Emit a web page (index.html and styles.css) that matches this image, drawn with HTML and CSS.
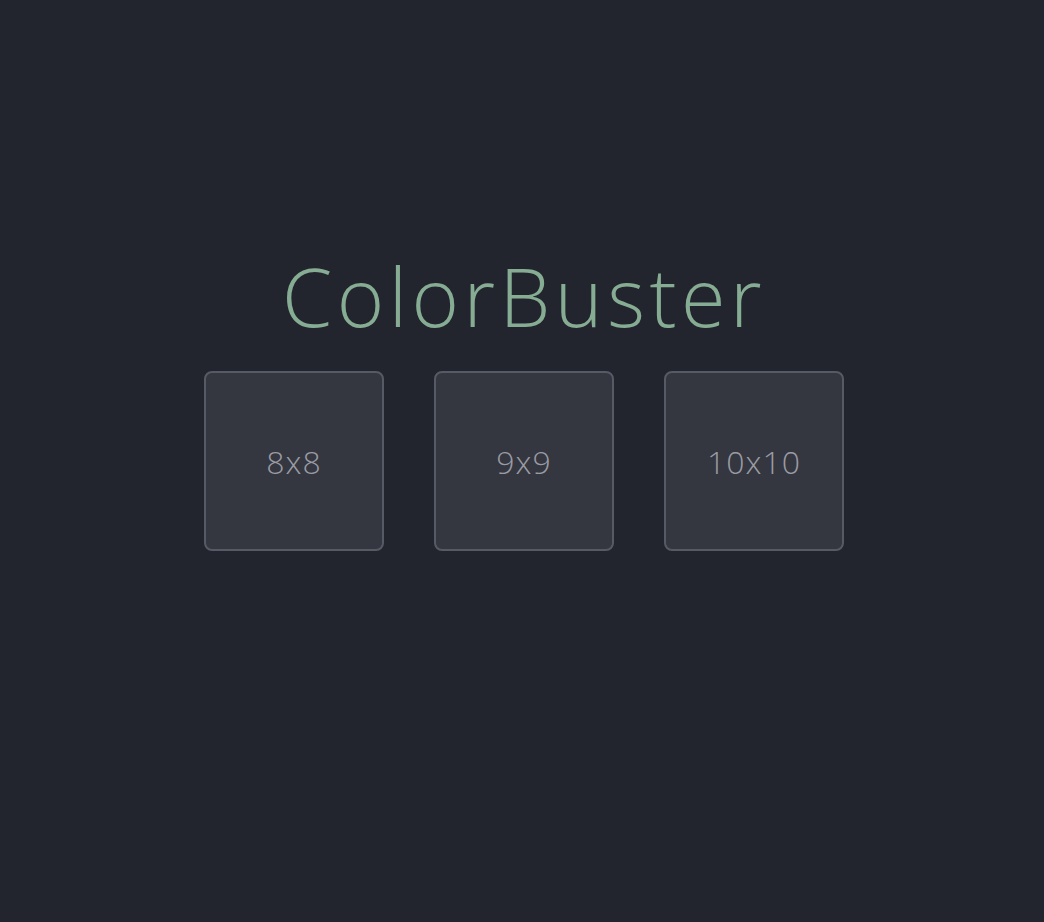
FILE: index.html
```html
<!DOCTYPE html>
<html>
<head>
<meta charset="utf-8">
<link rel="stylesheet" href="styles.css">
</head>
<body>
<main class="app">
  <h1 class="title">ColorBuster</h1>
  <div class="levels">
    <button class="level">8x8</button>
    <button class="level">9x9</button>
    <button class="level">10x10</button>
  </div>
</main>
</body>
</html>
```
FILE: styles.css
```css
html, body {
  margin: 0;
  padding: 0;
  background: #23252e;
}
.app {
  height: 922px;
  display: flex;
  flex-direction: column;
  align-items: center;
  padding-top: 246px;
  padding-left: 4px;
  box-sizing: border-box;
  font-family: "Open Sans", sans-serif;
}
.title {
  margin: 0;
  font-size: 81px;
  font-weight: 300;
  letter-spacing: 4.5px;
  color: #86ad93;
  line-height: 100px;
}
.levels {
  display: flex;
  gap: 50px;
  margin-top: 25px;
}
.level {
  width: 180px;
  height: 180px;
  box-sizing: border-box;
  background: #343640;
  border: 2px solid #565a65;
  border-radius: 8px;
  font-family: "Open Sans", sans-serif;
  font-weight: 300;
  font-size: 32px;
  letter-spacing: 1px;
  color: #9a9ba3;
  padding: 0;
}
```
